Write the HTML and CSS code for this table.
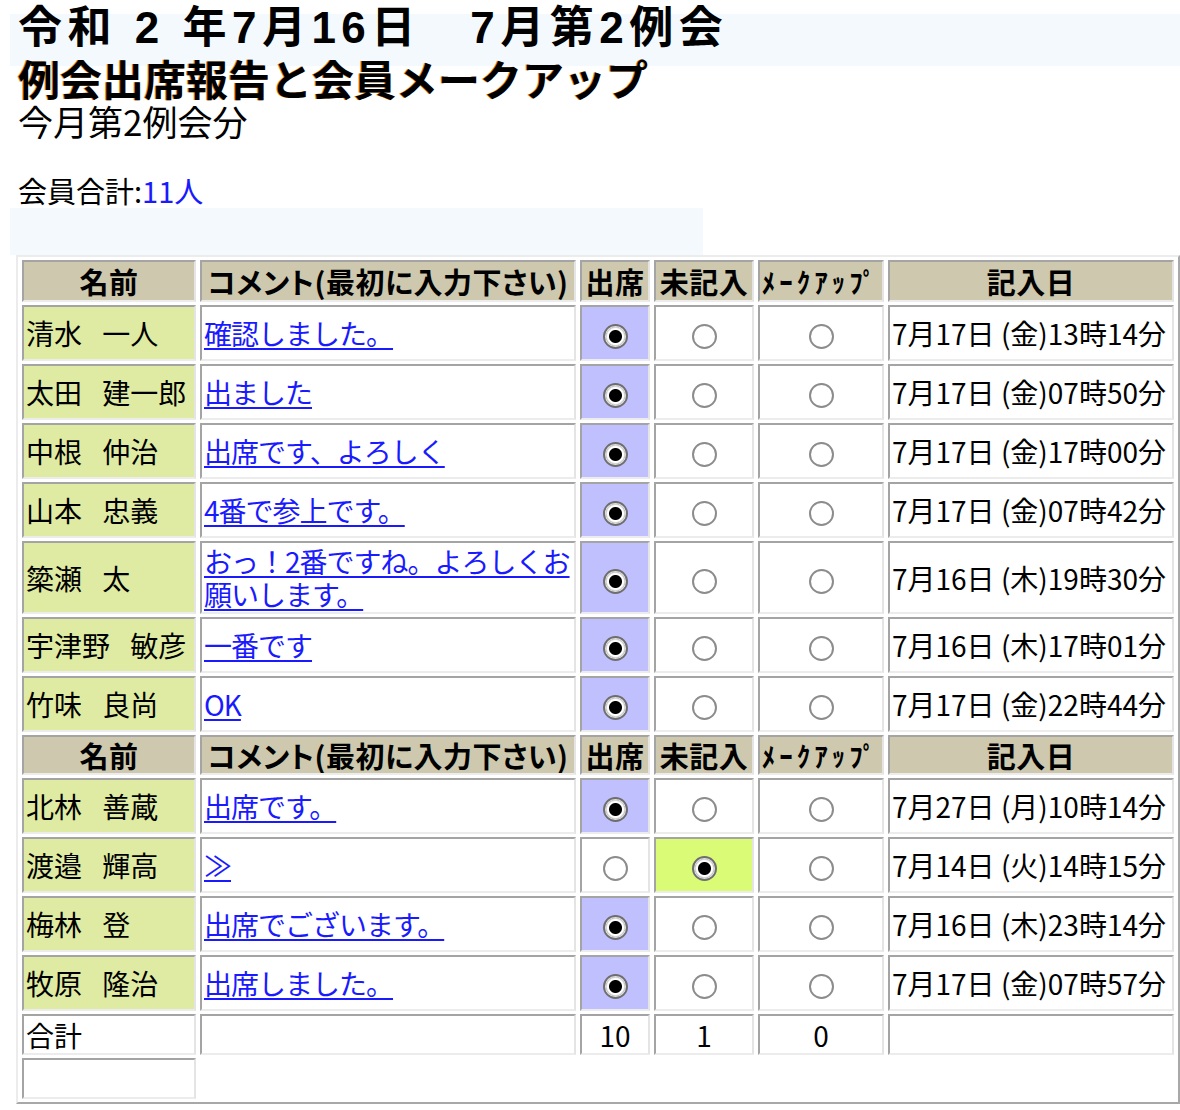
FILE: index.html
```html
<!DOCTYPE html>
<html lang="ja">
<head>
<meta charset="utf-8">
<title>例会出席報告と会員メークアップ</title>
<link rel="stylesheet" href="styles.css">
</head>
<body>
<div class="head">
  <h1 class="t1">令和 2 年7月16日　7月第2例会</h1>
  <h2 class="t2">例会出席報告と会員メークアップ</h2>
  <p class="t3">今月第2例会分</p>
</div>
<p class="total">会員合計:<span class="num">11人</span></p>
<div class="bluebox"></div>
<table class="att">
  <tr class="hrow">
    <th class="c-name">名前</th>
    <th class="c-cmt">コメント(最初に入力下さい)</th>
    <th class="c-att">出席</th>
    <th class="c-none">未記入</th>
    <th class="c-mk"><span class="hk">ﾒｰｸｱｯﾌﾟ</span></th>
    <th class="c-date">記入日</th>
  </tr>
  <tr class="drow">
    <td class="name">清水 一人</td>
    <td class="cmt"><a href="#">確認しました。</a></td>
    <td class="rad on"><span class="radio checked"></span></td>
    <td class="rad"><span class="radio"></span></td>
    <td class="rad"><span class="radio"></span></td>
    <td class="date">7月17日 (金)13時14分</td>
  </tr>
  <tr class="drow">
    <td class="name">太田 建一郎</td>
    <td class="cmt"><a href="#">出ました</a></td>
    <td class="rad on"><span class="radio checked"></span></td>
    <td class="rad"><span class="radio"></span></td>
    <td class="rad"><span class="radio"></span></td>
    <td class="date">7月17日 (金)07時50分</td>
  </tr>
  <tr class="drow">
    <td class="name">中根 仲治</td>
    <td class="cmt"><a href="#">出席です、よろしく</a></td>
    <td class="rad on"><span class="radio checked"></span></td>
    <td class="rad"><span class="radio"></span></td>
    <td class="rad"><span class="radio"></span></td>
    <td class="date">7月17日 (金)17時00分</td>
  </tr>
  <tr class="drow">
    <td class="name">山本 忠義</td>
    <td class="cmt"><a href="#">4番で参上です。</a></td>
    <td class="rad on"><span class="radio checked"></span></td>
    <td class="rad"><span class="radio"></span></td>
    <td class="rad"><span class="radio"></span></td>
    <td class="date">7月17日 (金)07時42分</td>
  </tr>
  <tr class="drow tall">
    <td class="name">簗瀬 太</td>
    <td class="cmt"><a href="#">おっ！2番ですね。よろしくお<br>願いします。</a></td>
    <td class="rad on"><span class="radio checked"></span></td>
    <td class="rad"><span class="radio"></span></td>
    <td class="rad"><span class="radio"></span></td>
    <td class="date">7月16日 (木)19時30分</td>
  </tr>
  <tr class="drow">
    <td class="name">宇津野 敏彦</td>
    <td class="cmt"><a href="#">一番です</a></td>
    <td class="rad on"><span class="radio checked"></span></td>
    <td class="rad"><span class="radio"></span></td>
    <td class="rad"><span class="radio"></span></td>
    <td class="date">7月16日 (木)17時01分</td>
  </tr>
  <tr class="drow">
    <td class="name">竹味 良尚</td>
    <td class="cmt"><a href="#">OK</a></td>
    <td class="rad on"><span class="radio checked"></span></td>
    <td class="rad"><span class="radio"></span></td>
    <td class="rad"><span class="radio"></span></td>
    <td class="date">7月17日 (金)22時44分</td>
  </tr>
  <tr class="hrow h2row">
    <th>名前</th>
    <th>コメント(最初に入力下さい)</th>
    <th>出席</th>
    <th>未記入</th>
    <th><span class="hk">ﾒｰｸｱｯﾌﾟ</span></th>
    <th>記入日</th>
  </tr>
  <tr class="drow">
    <td class="name">北林 善蔵</td>
    <td class="cmt"><a href="#">出席です。</a></td>
    <td class="rad on"><span class="radio checked"></span></td>
    <td class="rad"><span class="radio"></span></td>
    <td class="rad"><span class="radio"></span></td>
    <td class="date">7月27日 (月)10時14分</td>
  </tr>
  <tr class="drow">
    <td class="name">渡邉 輝高</td>
    <td class="cmt"><a href="#">≫</a></td>
    <td class="rad"><span class="radio"></span></td>
    <td class="rad none"><span class="radio checked"></span></td>
    <td class="rad"><span class="radio"></span></td>
    <td class="date">7月14日 (火)14時15分</td>
  </tr>
  <tr class="drow">
    <td class="name">梅林 登</td>
    <td class="cmt"><a href="#">出席でございます。</a></td>
    <td class="rad on"><span class="radio checked"></span></td>
    <td class="rad"><span class="radio"></span></td>
    <td class="rad"><span class="radio"></span></td>
    <td class="date">7月16日 (木)23時14分</td>
  </tr>
  <tr class="drow">
    <td class="name">牧原 隆治</td>
    <td class="cmt"><a href="#">出席しました。</a></td>
    <td class="rad on"><span class="radio checked"></span></td>
    <td class="rad"><span class="radio"></span></td>
    <td class="rad"><span class="radio"></span></td>
    <td class="date">7月17日 (金)07時57分</td>
  </tr>
  <tr class="sumrow">
    <td class="plain">合計</td>
    <td></td>
    <td class="num-c">10</td>
    <td class="num-c">1</td>
    <td class="num-c">0</td>
    <td></td>
  </tr>
  <tr class="sumrow">
    <td></td>
  </tr>
</table>
</body>
</html>
```

FILE: styles.css
```css
html, body {
  margin: 0;
  padding: 0;
  background: #ffffff;
}
body {
  font-family: "Noto Sans CJK JP", "Liberation Sans", sans-serif;
  color: #000;
  overflow: hidden;
}
.head {
  margin-left: 10px;
  padding-left: 8px;
  background: linear-gradient(to bottom, transparent 14px, #f4f9fd 14px, #f4f9fd 66px, transparent 66px);
}
.t1 {
  margin: 0;
  height: 56px;
  line-height: 56px;
  font-family: "Liberation Sans", "Noto Sans CJK JP", sans-serif;
  font-size: 44px;
  font-weight: bold;
  letter-spacing: 5.5px;
  white-space: pre;
}
.t2 {
  margin: 0;
  height: 44px;
  line-height: 44px;
  font-size: 42px;
  font-weight: bold;
  letter-spacing: 0;
  text-shadow: -1px 0 #e08a1e;
}
.t3 {
  margin: 0;
  height: 42px;
  line-height: 42px;
  font-size: 35px;
}
.total {
  margin: 30px 0 0 18px;
  height: 36px;
  line-height: 36px;
  font-size: 29px;
}
.total .num {
  color: #1a1aff;
}
.bluebox {
  margin-left: 10px;
  width: 693px;
  height: 47px;
  background: #f4f9fd;
}
.att {
  margin-left: 16px;
  width: 1164px;
  table-layout: fixed;
  border-collapse: separate;
  border-spacing: 4px 3px;
  border: 2px solid;
  border-color: #ececec #a8a8a8 #a8a8a8 #ececec;
  font-size: 28px;
  line-height: 32px;
}
.att th, .att td {
  box-sizing: border-box;
  border: 2px solid;
  border-color: #a4a4a4 #e4e4e4 #ececec #a4a4a4;
  padding: 0 2px;
  white-space: nowrap;
  overflow: hidden;
}
.c-name { width: 174px; }
.c-cmt { width: 376px; }
.c-att { width: 70px; }
.c-none { width: 100px; }
.c-mk { width: 126px; }
.c-date { width: 286px; }

.hrow th {
  height: 42px;
  background: #cdc8ae;
  font-weight: bold;
  font-size: 29px;
  text-align: center;
  font-feature-settings: "palt";
  letter-spacing: 0.5px;
  padding: 0;
}
.h2row th {
  height: 40px;
}
.hk {
  font-weight: bold;
  font-size: 27px;
  letter-spacing: 4px;
}
.drow td {
  height: 56px;
}
.drow.tall td {
  height: 73px;
}
.name {
  background: #dfeba2;
  text-align: left;
  word-spacing: 14px;
}
.cmt {
  text-align: left;
  line-height: 33px;
  letter-spacing: -1px;
}
.cmt a {
  color: #1a1aff;
  text-decoration: underline;
  text-underline-offset: 3px;
}
.rad {
  text-align: center;
  vertical-align: middle;
}
.rad.on {
  background: #c0c0ff;
}
.rad.none {
  background: #d9fb76;
}
.radio {
  display: inline-block;
  box-sizing: border-box;
  width: 25px;
  height: 25px;
  border-radius: 50%;
  border: 2px solid #8c8c8c;
  background: #fff;
  vertical-align: middle;
}
.radio.checked {
  border: 2px solid #6e6e6e;
  background: radial-gradient(circle, #000 0, #000 6px, #fff 7px, #fff 8px, #c4c4c4 9.5px, #fff 10.5px);
}
.date {
  text-align: left;
}
.sumrow td {
  height: 41px;
}
.num-c {
  text-align: center;
}
.plain {
  text-align: left;
}
```
